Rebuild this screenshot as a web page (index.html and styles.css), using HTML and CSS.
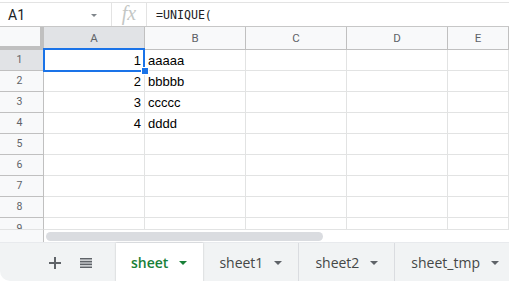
FILE: index.html
```html
<!DOCTYPE html>
<html lang="en">
<head>
    <meta charset="UTF-8">
    <title>Sheet</title>
    <link rel="stylesheet" href="styles.css">
</head>
<body>
    <div class="app">
        <div class="formula-bar">
            <div class="name-box">
                <span class="name">A1</span>
                <span class="caret"></span>
            </div>
            <div class="fx">fx</div>
            <div class="formula">=UNIQUE(</div>
        </div>

        <div class="grid">
            <div class="corner"></div>
            <div class="col-head selected">A</div>
            <div class="col-head">B</div>
            <div class="col-head">C</div>
            <div class="col-head">D</div>
            <div class="col-head">E</div>

            <div class="row-head selected">1</div>
            <div class="cell num active">1<span class="handle"></span></div>
            <div class="cell">aaaaa</div>
            <div class="cell"></div><div class="cell"></div><div class="cell"></div>

            <div class="row-head">2</div>
            <div class="cell num">2</div>
            <div class="cell">bbbbb</div>
            <div class="cell"></div><div class="cell"></div><div class="cell"></div>

            <div class="row-head">3</div>
            <div class="cell num">3</div>
            <div class="cell">ccccc</div>
            <div class="cell"></div><div class="cell"></div><div class="cell"></div>

            <div class="row-head">4</div>
            <div class="cell num">4</div>
            <div class="cell">dddd</div>
            <div class="cell"></div><div class="cell"></div><div class="cell"></div>

            <div class="row-head">5</div>
            <div class="cell"></div><div class="cell"></div><div class="cell"></div><div class="cell"></div><div class="cell"></div>

            <div class="row-head">6</div>
            <div class="cell"></div><div class="cell"></div><div class="cell"></div><div class="cell"></div><div class="cell"></div>

            <div class="row-head">7</div>
            <div class="cell"></div><div class="cell"></div><div class="cell"></div><div class="cell"></div><div class="cell"></div>

            <div class="row-head">8</div>
            <div class="cell"></div><div class="cell"></div><div class="cell"></div><div class="cell"></div><div class="cell"></div>

            <div class="row-head last">9</div>
            <div class="cell last"></div><div class="cell last"></div><div class="cell last"></div><div class="cell last"></div><div class="cell last"></div>
        </div>

        <div class="scroll-row">
            <div class="scroll-gutter"></div>
            <div class="scroll-track"><div class="thumb"></div></div>
        </div>

        <div class="tab-bar">
            <div class="tools">
                <svg class="icon" width="12" height="12" viewBox="0 0 12 12">
                    <path d="M5 0h2v5h5v2H7v5H5V7H0V5h5z" fill="#5f6368"/>
                </svg>
                <svg class="icon" width="12" height="10" viewBox="0 0 12 10">
                    <path d="M0 0h12v1.6H0zM0 2.8h12v1.6H0zM0 5.6h12v1.6H0zM0 8.4h12V10H0z" fill="#5f6368"/>
                </svg>
            </div>
            <div class="tab active">sheet<span class="tri"></span></div>
            <div class="tab">sheet1<span class="tri"></span></div>
            <div class="tab">sheet2<span class="tri"></span></div>
            <div class="tab">sheet_tmp<span class="tri"></span></div>
        </div>
    </div>
</body>
</html>
```

FILE: styles.css
```css
body {
    margin: 0;
    background-color: #FFFFFF;
    font-family: Roboto, 'Liberation Sans', sans-serif;
    overflow: hidden;
}

.app {
    width: 509px;
    height: 281px;
    overflow: hidden;
    border-bottom-left-radius: 10px;
}

.formula-bar {
    display: flex;
    align-items: center;
    height: 23px;
    margin-top: 2px;
    border-top: 1px solid #e3e3e3;
    border-bottom: 1px solid #c7c7c7;
}

.name-box {
    display: flex;
    align-items: center;
    justify-content: space-between;
    width: 89px;
    padding: 0 14px 0 8px;
    height: 100%;
    border-right: 1px solid #e3e3e3;
    box-sizing: content-box;
}

.name {
    font-size: 14px;
    color: #202124;
}

.caret {
    width: 0;
    height: 0;
    margin-top: 2px;
    border-left: 3px solid transparent;
    border-right: 3px solid transparent;
    border-top: 3px solid #80868b;
}

.fx {
    width: 34px;
    height: 100%;
    border-right: 1px solid #e3e3e3;
    text-align: center;
    font-family: 'Liberation Serif', serif;
    font-style: italic;
    font-size: 20px;
    line-height: 21px;
    color: #c4c7c5;
}

.formula {
    padding-left: 9px;
    font-family: 'DejaVu Sans Mono', monospace;
    font-size: 11.6px;
    color: #202124;
}

.grid {
    display: grid;
    grid-template-columns: 44px 101px 101px 101px 101px 1fr;
    grid-template-rows: 23px repeat(8, 21px) 12px;
}

.corner {
    background-color: #f8f9fa;
    border-right: 4px solid #c0c0c0;
    border-bottom: 4px solid #c0c0c0;
    box-sizing: border-box;
}

.col-head {
    background-color: #f8f9fa;
    border-right: 1px solid #c0c0c0;
    border-bottom: 1px solid #c0c0c0;
    color: #5f6368;
    font-size: 11.5px;
    text-align: center;
    line-height: 22px;
}

.col-head.selected,
.row-head.selected {
    background-color: #e1e3e6;
}

.row-head {
    background-color: #f8f9fa;
    border-right: 1px solid #c0c0c0;
    border-bottom: 1px solid #c0c0c0;
    color: #5f6368;
    font-size: 10.5px;
    text-align: center;
    line-height: 20px;
    padding-right: 4px;
}

.cell {
    position: relative;
    border-right: 1px solid #e2e3e3;
    border-bottom: 1px solid #e2e3e3;
    font-family: 'Liberation Sans', Arial, sans-serif;
    font-size: 13px;
    line-height: 21px;
    color: #000000;
    padding: 0 3px;
    white-space: nowrap;
}

.cell.num {
    text-align: right;
}

.row-head.last,
.cell.last {
    overflow: hidden;
    line-height: 22px;
    border-bottom: 1px solid #e2e3e3;
}

.cell.active::after {
    content: '';
    position: absolute;
    left: -1px;
    top: -2px;
    right: -1px;
    bottom: -2px;
    border: 2px solid #1a73e8;
}

.handle {
    position: absolute;
    right: -5px;
    bottom: -5px;
    width: 6px;
    height: 6px;
    background-color: #1a73e8;
    border: 1px solid #FFFFFF;
    z-index: 2;
}

.scroll-row {
    display: flex;
    height: 12px;
}

.scroll-gutter {
    width: 44px;
    border-right: 1px solid #c0c0c0;
    box-sizing: border-box;
    background-color: #f8f9fa;
}

.scroll-track {
    flex: 1;
    padding: 2px 0 0 2px;
}

.thumb {
    width: 277px;
    height: 9px;
    border-radius: 5px;
    background-color: #dadce0;
}

.tab-bar {
    display: flex;
    height: 39px;
    background-color: #f1f3f4;
    border-top: 1px solid #e8eaed;
}

.tools {
    display: flex;
    flex-shrink: 0;
    align-items: center;
    gap: 19px;
    width: 67px;
    padding-left: 49px;
}

.tab {
    display: flex;
    flex-shrink: 0;
    align-items: center;
    gap: 11px;
    padding: 0 16px;
    border-right: 1px solid #dadce0;
    font-family: 'Open Sans', Roboto, sans-serif;
    font-size: 14px;
    color: #444746;
}

.tab.active {
    background-color: #FFFFFF;
    color: #188038;
    font-weight: 600;
    box-shadow: 0 0 2px rgba(0, 0, 0, 0.2);
    border-right: none;
    padding-left: 15px;
}

.tri {
    width: 0;
    height: 0;
    border-left: 4px solid transparent;
    border-right: 4px solid transparent;
    border-top: 4px solid #5f6368;
}

.tab.active .tri {
    border-top-color: #188038;
}
```
